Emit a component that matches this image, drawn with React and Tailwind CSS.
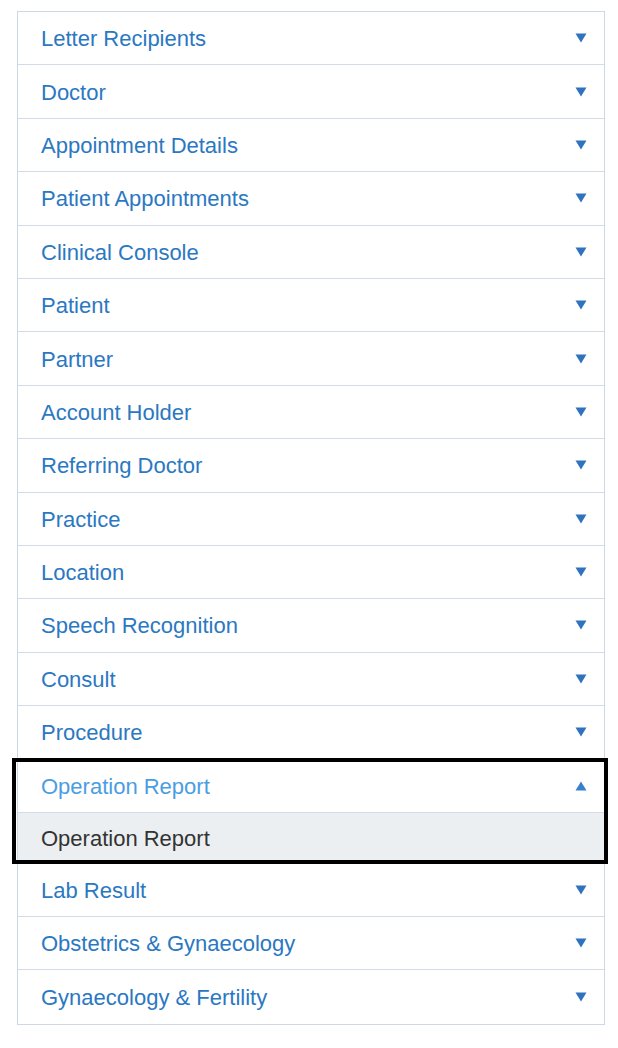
import React from "react";

const before = [
  "Letter Recipients",
  "Doctor",
  "Appointment Details",
  "Patient Appointments",
  "Clinical Console",
  "Patient",
  "Partner",
  "Account Holder",
  "Referring Doctor",
  "Practice",
  "Location",
  "Speech Recognition",
  "Consult",
  "Procedure",
];

const after = ["Lab Result", "Obstetrics & Gynaecology", "Gynaecology & Fertility"];

function Caret({ up }) {
  return (
    <svg width="12" height="10" viewBox="0 0 12 10" className="shrink-0">
      {up ? (
        <path d="M6 0.5 L11.5 9.5 L0.5 9.5 Z" fill="#3a7fcb" />
      ) : (
        <path d="M0.5 0.5 L11.5 0.5 L6 9.5 Z" fill="#2f72bd" />
      )}
    </svg>
  );
}

function Row({ label, up, light, last }) {
  return (
    <div
      className={`flex items-center justify-between h-[53.4px] pl-[23px] pr-[17px] ${
        last ? "" : "border-b border-[#d3dce6]"
      }`}
    >
      <span className={`pt-[2px] text-[22px] leading-none ${light ? "text-[#4b9de2]" : "text-[#2b78c2]"}`}>
        {label}
      </span>
      <Caret up={up} />
    </div>
  );
}

export default function App() {
  return (
    <div
      className="min-h-screen bg-white pt-[11px] pl-[17px] pr-[13px]"
      style={{ fontFamily: '"Liberation Sans", Arial, sans-serif' }}
    >
      <div className="border border-[#cfd8e2] bg-white">
        {before.map((l) => (
          <Row key={l} label={l} />
        ))}
        <div className="relative">
          <Row label="Operation Report" up light />
          <div className="flex items-center h-[50.6px] pl-[23px] bg-[#eceff1] border-b border-[#d3dce6]">
            <span className="pt-[2px] text-[22px] leading-none text-[#333333]">Operation Report</span>
          </div>
          <div className="absolute -top-[1px] -bottom-[1px] -left-[6px] -right-[4px] border-[4.5px] border-black pointer-events-none" />
        </div>
        {after.map((l, i) => (
          <Row key={l} label={l} last={i === after.length - 1} />
        ))}
      </div>
    </div>
  );
}
